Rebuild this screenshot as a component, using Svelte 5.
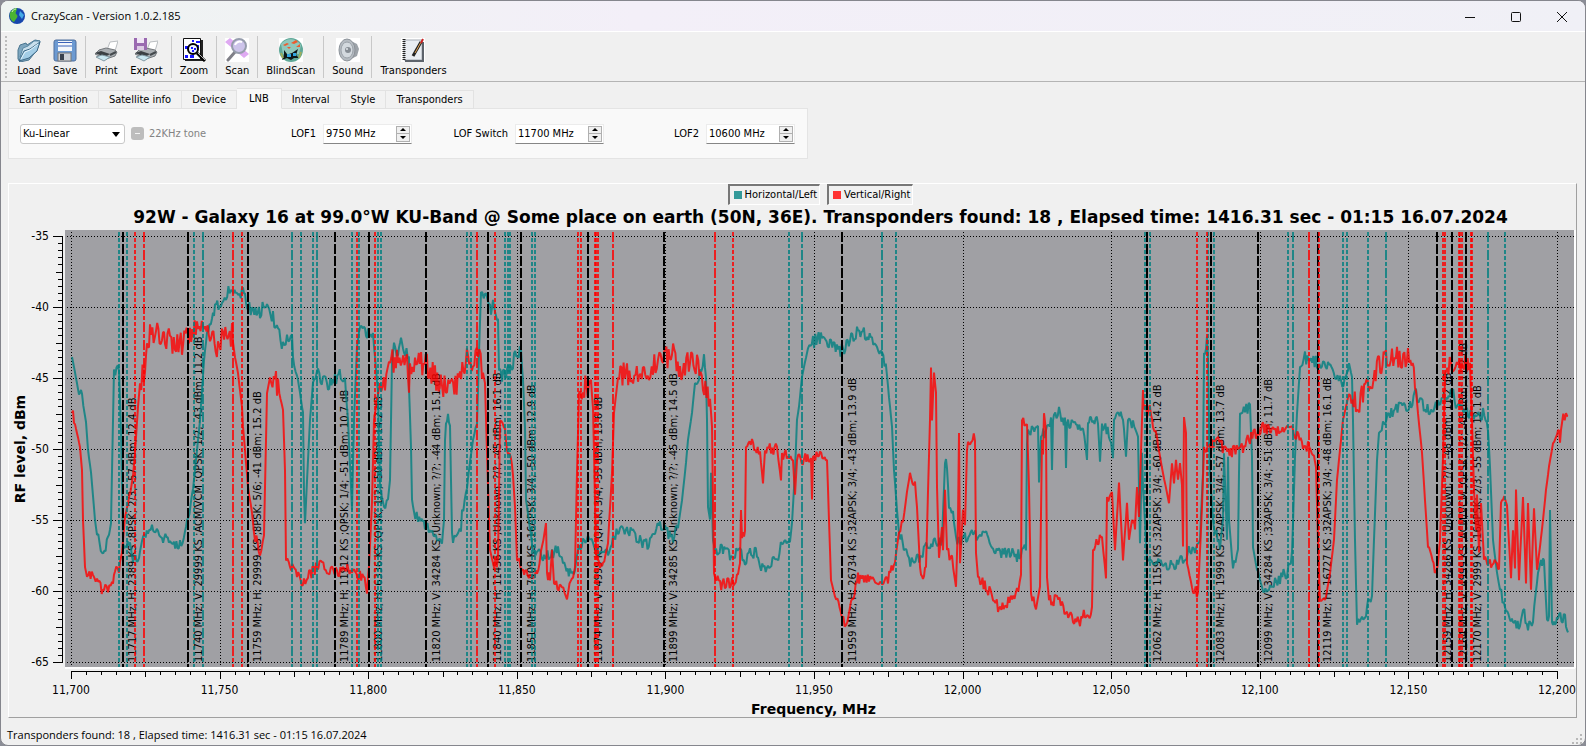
<script lang="ts">
  type Point = [number, number];
  type Marker = { x: number; kind: "black" | "teal" | "red"; long?: boolean };

  const tools = [
    ["load", "save"],
    ["print", "export"],
    ["zoom"],
    ["scan"],
    ["blind"],
    ["sound"],
    ["transponders"],
  ];
  const toolNames: Record<string, string> = {
    load: "Load",
    save: "Save",
    print: "Print",
    export: "Export",
    zoom: "Zoom",
    scan: "Scan",
    blind: "BlindScan",
    sound: "Sound",
    transponders: "Transponders",
  };

  const tabs = [
    "Earth position",
    "Satellite info",
    "Device",
    "LNB",
    "Interval",
    "Style",
    "Transponders",
  ];
  let activeTab = $state("LNB");

  let fields = $state([
    { id: "lof1", label: "LOF1", value: 9750 },
    { id: "lofsw", label: "LOF Switch", value: 11700 },
    { id: "lof2", label: "LOF2", value: 10600 },
  ]);

  const found = "Transponders found: 18 , Elapsed time: 1416.31 sec - 01:15 16.07.2024";

  // The chart is laid out for a panel this wide and stretched along x from there.
  const BASE = 1567;
  const LEFT = 71;
  let width = $state(BASE);
  const k = $derived((width - 81) / (BASE - 81));
  const sx = (x: number) => Math.round((LEFT + (x - LEFT) * k) * 10) / 10;
  const mhz = (f: number) => sx(LEFT + ((f - 11700) * 1486) / 500);
  const db = (v: number) => 236 + (-35 - v) * 14.2;

  const yTicks = Array.from({ length: 61 }, (_, i) => ({
    v: -35 - i / 2,
    len: i % 10 === 0 ? 9 : i % 5 === 0 ? 6 : 4,
  }));
  const xTicks = Array.from({ length: 101 }, (_, i) => ({
    v: 11700 + i * 5,
    len: i % 10 === 0 ? 8 : i % 5 === 0 ? 6 : 4,
  }));

  const teal: Point[] = [
    [72,357],[76,378],[79,394],[82,398],[86,422],[88,450],[91,472],[95,520],[97,535],[102,552],[108,541],[111,523],[113,420],[114,370],[119,370],
    [121,430],[123,543],[130,548],[133,556],[139,556],[142,541],[148,535],[152,527],[158,528],[162,537],[170,537],[174,546],[180,543],[185,533],
    [187,520],[192,500],[200,420],[204,360],[207,333],[212,317],[215,308],[222,305],[226,293],[232,292],[242,293],[245,298],[248,307],[252,313],
    [260,313],[265,305],[268,308],[273,318],[278,333],[283,347],[287,335],[292,337],[293,357],[297,373],[300,393],[303,413],[304,493],[305,523],
    [308,460],[310,420],[313,382],[318,375],[323,380],[328,385],[335,378],[342,375],[345,382],[348,420],[352,510],[354,420],[357,347],[359,332],
    [365,330],[368,333],[373,335],[375,357],[378,393],[380,487],[384,507],[388,500],[390,480],[392,363],[394,343],[398,352],[401,338],[404,353],
    [409,357],[409,387],[411,447],[412,500],[414,512],[418,520],[425,525],[430,533],[437,535],[442,543],[444,520],[445,440],[446,423],[448,417],
    [450,423],[451,480],[452,533],[453,543],[457,533],[461,528],[462,510],[466,497],[469,470],[473,440],[477,427],[479,353],[481,292],[485,295],
    [490,300],[491,315],[493,300],[495,312],[498,320],[499,370],[502,377],[505,375],[508,367],[513,363],[514,353],[521,353],[523,380],[525,427],
    [526,500],[533,550],[538,552],[543,555],[552,555],[558,548],[563,560],[570,573],[575,568],[578,550],[583,542],[593,540],[597,553],[603,553],
    [608,555],[613,538],[620,528],[627,530],[633,535],[640,540],[645,545],[650,543],[655,532],[660,525],[665,530],[673,537],[678,528],[682,500],
    [686,463],[688,440],[692,413],[695,383],[700,372],[704,358],[706,377],[707,420],[708,507],[710,520],[711,473],[713,540],[715,550],[723,550],
    [730,555],[740,550],[745,560],[750,552],[757,553],[760,567],[768,567],[777,560],[782,543],[790,542],[792,523],[795,470],[797,420],[799,407],
    [802,377],[805,362],[808,348],[813,342],[822,337],[830,343],[838,350],[843,350],[850,340],[857,333],[865,333],[872,338],[877,353],[882,357],
    [887,375],[889,397],[892,427],[894,470],[897,510],[899,533],[905,550],[909,560],[913,565],[918,558],[925,550],[930,543],[942,543],[943,513],
    [945,463],[947,463],[949,508],[953,515],[956,537],[960,545],[965,537],[973,535],[985,533],[992,545],[1000,553],[1010,552],[1017,557],
    [1022,550],[1026,545],[1027,443],[1028,430],[1038,430],[1039,482],[1041,437],[1047,430],[1051,423],[1052,470],[1053,420],[1054,417],
    [1059,412],[1065,422],[1066,468],[1067,423],[1075,423],[1078,433],[1083,423],[1087,460],[1088,423],[1091,416],[1098,422],[1100,462],
    [1102,424],[1110,435],[1113,458],[1114,420],[1123,416],[1126,457],[1128,420],[1133,423],[1138,435],[1140,543],[1142,453],[1143,487],
    [1147,557],[1157,563],[1167,567],[1177,563],[1183,560],[1190,548],[1195,548],[1200,537],[1203,473],[1204,353],[1207,343],[1208,360],
    [1210,473],[1213,520],[1220,547],[1223,520],[1224,453],[1227,540],[1228,457],[1229,520],[1232,557],[1233,568],[1238,550],[1239,473],
    [1240,413],[1245,410],[1250,407],[1252,457],[1253,547],[1257,570],[1262,588],[1270,585],[1280,578],[1287,572],[1292,557],[1295,457],
    [1297,413],[1300,367],[1305,358],[1317,362],[1328,365],[1335,373],[1340,382],[1347,378],[1349,363],[1352,377],[1353,420],[1355,540],
    [1357,625],[1362,620],[1366,613],[1368,600],[1372,595],[1374,540],[1377,460],[1379,433],[1383,427],[1390,413],[1400,407],[1410,407],
    [1416,393],[1420,403],[1430,410],[1437,407],[1452,390],[1457,407],[1467,413],[1475,420],[1483,413],[1488,427],[1490,467],[1493,540],
    [1497,573],[1500,590],[1505,610],[1513,620],[1520,625],[1523,610],[1528,630],[1533,617],[1538,573],[1541,560],[1544,563],[1547,620],
    [1549,622],[1550,510],[1552,622],[1555,627],[1558,617],[1565,618],[1568,627],
  ];
  const red: Point[] = [
    [72,413],[74,420],[77,433],[80,447],[82,470],[83,520],[85,567],[87,577],[93,575],[97,583],[104,592],[108,587],[112,583],[115,573],[119,567],
    [122,553],[125,517],[128,503],[132,487],[135,453],[138,407],[140,383],[145,367],[147,343],[150,333],[162,335],[165,343],[170,338],[175,347],
    [182,343],[190,333],[197,325],[203,323],[210,333],[218,347],[223,338],[232,335],[235,357],[238,373],[242,407],[243,427],[248,487],[252,513],
    [254,533],[260,553],[264,537],[265,487],[267,393],[270,377],[275,378],[278,387],[283,410],[285,470],[286,560],[290,567],[297,573],[304,583],
    [308,577],[317,567],[322,560],[327,568],[337,572],[345,565],[353,572],[360,575],[367,588],[369,567],[372,503],[374,420],[377,400],[380,383],
    [385,380],[389,362],[397,360],[407,363],[409,393],[410,363],[420,363],[428,367],[435,377],[442,387],[452,390],[460,380],[468,353],[473,363],
    [478,353],[482,367],[485,383],[487,453],[490,550],[493,563],[498,563],[500,420],[505,433],[507,450],[512,460],[515,507],[517,560],[523,568],
    [530,577],[537,570],[542,550],[546,523],[547,573],[550,580],[552,550],[554,583],[562,588],[567,595],[572,583],[575,567],[577,473],[579,393],
    [583,388],[590,387],[593,397],[594,453],[596,553],[600,568],[603,567],[608,543],[612,473],[614,413],[618,378],[627,373],[638,372],[649,380],
    [653,367],[663,360],[672,353],[680,370],[690,360],[697,367],[703,387],[710,397],[712,427],[714,573],[720,585],[737,580],[740,563],[741,510],
    [742,538],[745,533],[746,447],[752,445],[760,453],[763,483],[765,450],[777,448],[781,480],[782,453],[788,457],[793,460],[795,495],[797,460],
    [811,458],[812,500],[813,457],[827,458],[829,520],[831,580],[835,597],[842,615],[846,630],[850,607],[858,578],[880,582],[888,580],[895,560],
    [899,533],[903,523],[907,492],[910,473],[915,485],[917,507],[920,567],[923,575],[926,570],[928,492],[930,420],[931,367],[932,420],[934,373],
    [936,393],[937,487],[939,558],[942,527],[943,550],[945,490],[947,550],[952,560],[956,587],[958,520],[959,433],[960,563],[963,510],[965,525],
    [967,450],[970,440],[975,438],[976,553],[978,577],[987,587],[993,598],[998,607],[1007,602],[1017,593],[1021,580],[1022,420],[1027,423],
    [1029,487],[1031,593],[1036,608],[1040,587],[1042,440],[1043,455],[1044,413],[1046,430],[1047,577],[1049,600],[1057,600],[1067,612],
    [1073,620],[1080,622],[1085,613],[1092,612],[1093,550],[1102,537],[1106,578],[1107,497],[1112,492],[1115,550],[1119,483],[1123,560],
    [1127,503],[1129,540],[1132,520],[1135,525],[1137,487],[1139,517],[1142,420],[1143,390],[1144,410],[1151,410],[1153,427],[1157,440],
    [1163,473],[1169,503],[1172,463],[1174,483],[1176,460],[1178,480],[1180,463],[1182,485],[1183,547],[1184,417],[1186,433],[1187,563],
    [1192,587],[1198,595],[1202,507],[1204,447],[1210,447],[1217,440],[1225,450],[1233,452],[1243,447],[1250,438],[1263,427],[1273,433],
    [1285,427],[1295,433],[1303,443],[1313,450],[1316,467],[1318,540],[1320,600],[1325,603],[1330,573],[1334,540],[1337,480],[1340,450],
    [1343,420],[1348,397],[1357,403],[1363,397],[1370,380],[1378,367],[1387,360],[1397,357],[1402,363],[1408,357],[1415,380],[1418,413],
    [1422,453],[1425,500],[1428,547],[1437,575],[1440,540],[1443,457],[1445,373],[1452,362],[1463,363],[1470,370],[1472,420],[1474,490],
    [1476,530],[1477,495],[1479,552],[1481,503],[1484,560],[1497,567],[1499,570],[1501,503],[1503,497],[1507,507],[1511,578],[1513,530],
    [1515,568],[1516,490],[1519,580],[1523,497],[1526,583],[1528,503],[1531,590],[1534,508],[1537,570],[1540,547],[1543,520],[1546,490],
    [1549,467],[1553,443],[1557,433],[1560,437],[1562,423],[1566,412],[1568,413],
  ];

  // Receiver noise rides on the flat parts; flanks stay clean.
  function noisy(points: Point[], seed: number, strong: number) {
    let s = seed;
    const rnd = () => (s = (s * 16807) % 2147483647) / 2147483647 - 0.5;
    const out: Point[] = [points[0]];
    for (let i = 1; i < points.length; i++) {
      const [x0, y0] = points[i - 1];
      const [x1, y1] = points[i];
      const dx = x1 - x0;
      const slope = Math.abs(y1 - y0) / Math.max(dx, 1);
      const amp = slope > 4 ? 1 : (y0 + y1) / 2 < 405 ? strong : 12;
      const n = Math.max(1, Math.round(dx / 1.2));
      for (let j = 1; j <= n; j++) {
        out.push([x0 + (dx * j) / n, y0 + ((y1 - y0) * j) / n + rnd() * amp]);
      }
    }
    return out;
  }
  const tealTrace = noisy(teal, 411, 14);
  const redTrace = noisy(red, 97, 25);
  const toPoints = (t: Point[]) =>
    t.map(([x, y]) => `${sx(x)},${y.toFixed(1)}`).join(" ");

  const longDash = [144, 203, 233, 292, 317, 477, 613, 715, 802, 882, 1293, 1309, 1386, 1488];
  const mark = (kind: Marker["kind"], xs: number[]): Marker[] =>
    xs.map((x) => ({ x, kind, long: longDash.includes(x) }));
  const markers = [
    ...mark("teal", [119, 127, 194, 203, 292, 301, 313, 317, 352, 359, 378, 381, 467, 471, 505, 508, 510, 532, 535, 789, 802, 882, 896, 1145, 1147, 1150, 1208, 1214, 1288, 1293, 1343, 1347, 1368, 1386, 1488, 1505]),
    ...mark("black", [123, 188, 248, 335, 369, 426, 488, 521, 588, 664, 842, 1147, 1211, 1258, 1318, 1437, 1452, 1466]),
    ...mark("red", [135, 144, 233, 242, 357, 375, 477, 495, 578, 581, 595, 596, 598, 613, 715, 733, 1197, 1207, 1309, 1319, 1443, 1445, 1459, 1460, 1462, 1471, 1472]),
  ];

  const carriers = [
    { x: 136, text: "11717 MHz; H; 2389 KS ;8PSK; 2/3; -57 dBm; 12.4 dB" },
    { x: 202, text: "11740 MHz; V; 29999 KS ;ACM/VCM ;QPSK; 1/2; -43 dBm; 11.2 dB" },
    { x: 261, text: "11759 MHz; H; 29999 KS ;8PSK; 5/6; -41 dBm; 15.2 dB" },
    { x: 348, text: "11789 MHz; H; 11912 KS ;QPSK; 1/4; -51 dBm; 10.7 dB" },
    { x: 382, text: "11800 MHz; H; 6336 KS ;QPSK; 1/2; -50 dBm; 14.2 dB" },
    { x: 440, text: "11820 MHz; V; 34284 KS ;Unknown; ?/?; -44 dBm; 15.1 dB" },
    { x: 501, text: "11840 MHz; H; 11436 KS ;Unknown; ?/?; -45 dBm; 16.1 dB" },
    { x: 535, text: "11851 MHz; H; 7409 KS ;16APSK; 3/4; -50 dBm; 12.9 dB" },
    { x: 602, text: "11874 MHz; V; 4999 KS ;QPSK; 3/4; -55 dBm; 13.6 dB" },
    { x: 677, text: "11899 MHz; V; 34285 KS ;Unknown; ?/?; -45 dBm; 14.5 dB" },
    { x: 856, text: "11959 MHz; H; 26734 KS ;32APSK; 3/4; -43 dBm; 13.9 dB" },
    { x: 1161, text: "12062 MHz; H; 1159 KS ;32APSK; 3/4; -60 dBm; 14.2 dB" },
    { x: 1224, text: "12083 MHz; H; 1999 KS ;32APSK; 3/4; -57 dBm; 13.7 dB" },
    { x: 1272, text: "12099 MHz; V; 34284 KS ;32APSK; 3/4; -51 dBm; 11.7 dB" },
    { x: 1331, text: "12119 MHz; H; 16727 KS ;32APSK; 3/4; -48 dBm; 16.1 dB" },
    { x: 1451, text: "12159 MHz; H; 34286 KS ;Unknown; ?/?; -48 dBm; 11.2 dB" },
    { x: 1467, text: "12164 MHz; V; 4999 KS ;ACM/VCM ;QPSK; 1/2; -48 dBm; 11.2 dB" },
    { x: 1481, text: "12170 MHz; V; 2999 KS ;16APSK; 2/3; -55 dBm; 12.1 dB" },
  ];
</script>

{#snippet toolIcon(name: string)}
  <svg class="tool-icon" width="24" height="24" viewBox="0 0 24 24" aria-hidden="true">
    {#if name === "load"}
      <path d="M1 12 3 7l6-2 1 2 8-5 5 1-3 9-8 10-9 2-2-3z" fill="#7ea6bf" stroke="#4b7690" />
      <path d="m3 19 3-9 5-2 6-5 6 0-3 8-8 6z" fill="#c9dfec" stroke="#5d8aa5" />
      <path d="m2 23 5-10 6-2 10-7-3 9-8 7z" fill="#a3cde6" stroke="#3d6885" />
      <path d="m4 21 4-7 5-2 8-6" fill="none" stroke="#e4f4fc" />
    {:else if name === "save"}
      <rect x="1" y="2" width="22" height="21" rx="2" fill="#6c9ad2" stroke="#4f6e9c" />
      <rect x="5" y="3" width="14" height="10" fill="#f3f7fb" />
      <path d="M5 4.5h14M5 8h14" stroke="#3b62b8" />
      <rect x="5" y="15" width="13" height="8" fill="#cfd3d8" stroke="#777" />
      <rect x="7" y="16" width="4" height="6" fill="#39424e" />
    {:else if name === "print" || name === "export"}
      <path d="m13 12 3-8 8-1-3 10z" fill="#fff" stroke="#b9bdc0" />
      <path d="m5 12 7-2 9 2 2 2-2 4-9 3-11-5z" fill="#a9aeb2" stroke="#74787c" />
      <path d="m1 15 6-2 9 3-5 3z" fill="#3a3f43" />
      <path d="m2 19 6-2 8 2-6 4z" fill="#c8e6f0" stroke="#8299a3" />
      <path d="m16 17 6-3" stroke="#44494d" stroke-width="2" />
      {#if name === "export"}
        <rect x="0" y="0" width="13" height="12" fill="#9a6ab0" />
        <rect x="3" y="0" width="7" height="5" fill="#f1e6f6" />
        <rect x="3" y="8" width="7" height="4" fill="#dccbe4" />
      {/if}
    {:else if name === "zoom"}
      <path d="M3 2h18v21H3z" fill="#222" />
      <path d="M1.500.500h17v21h-17z" fill="#fff" stroke="#111" />
      <path d="M3 8h3v3H3zM14 3h4v2h-4zM3 17h3v3H3zM8 17h4v3H8zM15 7h2v3h-2zM10 2h2v2h-2z" fill="#1616ff" />
      <circle cx="11" cy="11" r="5" fill="#eef2ff" stroke="#000" stroke-width="2" />
      <path d="M9 9h2v2H9zM12 10h2v2h-2zM10 12h2v2h-2z" fill="#1c1cff" />
      <path d="m15 15 8 8" stroke="#000" stroke-width="3" />
      <path d="m16 15 7 7" stroke="#bbb" />
    {:else if name === "scan"}
      <path d="M0 0h24v24H0z" fill="#fff" />
      <path d="m0 4 5-4 19 16-5 4z" fill="#dfaaf2" />
      <path d="m10 14-7 8" stroke="#808088" stroke-width="3" stroke-linecap="round" />
      <circle cx="14" cy="8" r="7" fill="#cdc4ea" stroke="#969dac" stroke-width="2" />
      <path d="M10 7c1-3 4-4 7-3" fill="none" stroke="#fff" stroke-width="2" />
    {:else if name === "blind"}
      <path d="M0 0h24v24H0z" fill="#fff" />
      <circle cx="12" cy="12" r="12" fill="#5fa898" />
      <path d="M2 6c5-6 14-7 20 1l-2 9H4z" fill="#90c7bb" />
      <path d="m4 7 4-2 2 1-4 2zM12 5l5-3 2 2-4 2zM17 9l4-3v3zM8 9l4 0-2 2z" fill="#ee5b2e" />
      <path d="m5 12 3 4h2l3-1 6-4-2 6 3 3-5 0-3 2-4-2-5 2 2-5z" fill="#0d1719" />
      <path d="M8 16h4v3H8zM14 15h3v3h-3z" fill="#31a5e2" />
      <path d="m2 15 2 5M22 14l-2 6" stroke="#9fae5d" stroke-width="2" />
    {:else if name === "sound"}
      <path d="M0 0h24v24H0z" fill="#fff" />
      <path d="m11 1 10 5 2 5-2 7-10 5z" fill="#9da3a9" />
      <ellipse cx="11" cy="12" rx="8" ry="11" fill="#b5bbc1" stroke="#8c9299" />
      <ellipse cx="11" cy="12" rx="6" ry="8" fill="#d3d9de" stroke="#9aa1a8" />
      <circle cx="12" cy="12" r="3" fill="#868d94" />
      <circle cx="11" cy="11" r="1" fill="#dfe5e9" />
    {:else}
      <path d="M0 0h24v24H0z" fill="#fff" />
      <path d="M3 2h18v20H3z" fill="#e9edf2" stroke="#a5abb3" />
      <path d="M4 23h18V4" fill="none" stroke="#5d636b" stroke-width="2" />
      <path d="M3 1v22" stroke="#222" stroke-width="3" stroke-dasharray="1 1" />
      <path d="M12 18 20 4" stroke="#222" stroke-width="3" />
      <path d="M14 15 20 4" stroke="#e0a050" stroke-width="1" />
      <path d="m20 5 2-4" stroke="#c22" stroke-width="2" />
    {/if}
  </svg>
{/snippet}

<div class="window">
  <header class="titlebar">
    <svg width="16" height="16" viewBox="0 0 16 16" aria-hidden="true">
      <circle cx="8" cy="8" r="8" fill="#1747ad" />
      <path d="M1 5C2 2 5 0 8 0c0 3-2 4-1 6 2 1 2 3 0 5l-2 3C2 13 0 9 1 5z" fill="#4bb432" />
      <path d="m11 3 4 4-2 4-3-4z" fill="#43a9e6" />
      <path d="M3 4c1-2 2-3 4-3" stroke="#d5f5c4" fill="none" />
    </svg>
    <span class="caption">CrazyScan - Version 1.0.2.185</span>
    <button class="sys" aria-label="Minimize">
      <svg width="12" height="12" viewBox="0 0 12 12"><path d="M1 6.500h10" /></svg>
    </button>
    <button class="sys" aria-label="Maximize">
      <svg width="12" height="12" viewBox="0 0 12 12"><rect x="1.500" y="1.500" width="9" height="9" rx="1" /></svg>
    </button>
    <button class="sys" aria-label="Close">
      <svg width="12" height="12" viewBox="0 0 12 12"><path d="m1 1 10 10M11 1 1 11" /></svg>
    </button>
  </header>

  <div class="toolbar" role="toolbar">
    <span class="grip"></span>
    {#each tools as group, i}
      {#if i > 0}<span class="sep"></span>{/if}
      {#each group as name}
        <button class="tool">
          {@render toolIcon(name)}
          {toolNames[name]}
        </button>
      {/each}
    {/each}
  </div>

  <div class="tabs" role="tablist">
    {#each tabs as tab}
      <button
        class="tab"
        class:active={tab === activeTab}
        role="tab"
        aria-selected={tab === activeTab}
        onclick={() => (activeTab = tab)}>{tab}</button
      >
    {/each}
  </div>
  <div class="pane" role="tabpanel">
    <div class="lnb">
      <div class="combo">
        <select aria-label="LNB type">
          <option>Ku-Linear</option>
        </select>
      </div>
      <label class="tone"><input type="checkbox" disabled />22KHz tone</label>
    </div>
    {#each fields as field}
      <div class="field">
        <label for={field.id}>{field.label}</label>
        <div class="spin">
          <input id={field.id} type="text" value={`${field.value} MHz`} />
          <div class="arrows">
            <button aria-label="Increase" onclick={() => field.value++}>
              <svg width="6" height="3" viewBox="0 0 6 3"><path d="M0 3 3 0 6 3z" /></svg>
            </button>
            <button aria-label="Decrease" onclick={() => field.value--}>
              <svg width="6" height="3" viewBox="0 0 6 3"><path d="M0 0 3 3 6 0z" /></svg>
            </button>
          </div>
        </div>
      </div>
    {/each}
  </div>

  <main class="chart" bind:clientWidth={width}>
    <div class="legend">
      <button><i class="swatch teal"></i>Horizontal/Left</button>
      <button><i class="swatch red"></i>Vertical/Right</button>
    </div>
    <h1>
      92W - Galaxy 16 at 99.0°W KU-Band @ Some place on earth (50N, 36E). {found}
    </h1>
    <svg {width} height="487" viewBox={`9 230 ${width} 487`}>
      <rect x="65" y="230" width={sx(1575) - 65} height="437" fill="#a0a0a4" />
      <path class="sunken" d={`M65 668H${sx(1575)}M${sx(1575)} 230V668`} />
      {#each yTicks as t}
        {#if t.len === 9}
          <line class="grid" x1="67" x2={sx(1574)} y1={db(t.v) + 0.5} y2={db(t.v) + 0.5} />
          <text class="num" x="49" y={db(t.v) + 4} text-anchor="end">{t.v}</text>
        {/if}
        <line class="axis" x1={62 - t.len} x2="62" y1={Math.round(db(t.v)) + 0.5} y2={Math.round(db(t.v)) + 0.5} />
      {/each}
      <line class="axis" x1="62.5" x2="62.5" y1="236" y2="663" />
      {#each xTicks as t}
        {#if t.len === 8}
          <line class="grid" x1={Math.round(mhz(t.v)) + 0.5} x2={Math.round(mhz(t.v)) + 0.5} y1="232" y2="667" />
          <text class="num" x={mhz(t.v)} y="694" text-anchor="middle">{t.v.toLocaleString("en-US")}</text>
        {/if}
        <line class="axis" x1={Math.round(mhz(t.v)) + 0.5} x2={Math.round(mhz(t.v)) + 0.5} y1="671" y2={671 + t.len} />
      {/each}
      <line class="axis" x1="71" x2={sx(1558)} y1="671.5" y2="671.5" />

      {#each carriers as c}
        <text class="carrier" transform={`translate(${sx(c.x)} 662) rotate(-90)`}>{c.text}</text>
      {/each}
      <polyline class="trace teal" points={toPoints(tealTrace)} />
      <polyline class="trace red" points={toPoints(redTrace)} />
      {#each markers as m}
        <line class={["marker", m.kind, m.long && "long"]} x1={sx(m.x)} x2={sx(m.x)} y1="232" y2="667" />
      {/each}

      <text class="axis-title" x={(62 + sx(1575)) / 2 - 5} y="714" text-anchor="middle">Frequency, MHz</text>
      <text class="axis-title" transform="translate(25 449) rotate(-90)" text-anchor="middle">RF level, dBm</text>
    </svg>
  </main>

  <footer class="status">
    <span>{found}</span>
    <svg width="11" height="11" viewBox="0 0 11 11" aria-hidden="true">
      <path d="M8 0h2v2H8zM4 4h2v2H4zM8 4h2v2H8zM0 8h2v2H0zM4 8h2v2H4zM8 8h2v2H8z" fill="#b8b8b8" />
    </svg>
  </footer>
</div>

<style>
  :global(body) {
    background: #8b8d96;
  }

  .window {
    display: flex;
    flex-direction: column;
    box-sizing: border-box;
    min-height: 100vh;
    border: 1px solid #85868d;
    border-radius: 8px;
    overflow: hidden;
    background: #f0f0f0;
    color: #000;
    font: 11px/14px "DejaVu Sans Condensed", "DejaVu Sans", sans-serif;
    font-stretch: condensed;
  }

  button,
  input,
  select {
    font: inherit;
    color: inherit;
  }

  button {
    margin: 0;
    padding: 0;
    border: 0;
    background: none;
  }

  .titlebar {
    display: flex;
    align-items: center;
    height: 30px;
    padding-left: 8px;
    background: linear-gradient(90deg, #eef4f1, #f3eff8 40%, #f0f0f6);
    font: 11px/16px "Open Sans", sans-serif;
  }

  .caption {
    flex: 1;
    margin-left: 6px;
  }

  .sys {
    width: 46px;
    height: 30px;
  }

  .sys svg {
    fill: none;
    stroke: #111;
    vertical-align: middle;
  }

  .toolbar {
    display: flex;
    align-items: stretch;
    height: 42px;
    padding: 4px 0 3px 4px;
    border-top: 1px solid #fff;
    border-bottom: 1px solid #b4b4b4;
  }

  .grip {
    width: 2px;
    margin-right: 2px;
    border-left: 2px dotted #bcbcbc;
  }

  .sep {
    width: 1px;
    margin: 0 2px;
    background: #c8c8c8;
  }

  .tool {
    display: flex;
    flex-direction: column;
    align-items: center;
    padding: 2px 6px 0;
    white-space: nowrap;
  }

  .tool-icon {
    margin-bottom: 2px;
  }

  .tabs {
    display: flex;
    align-items: flex-end;
    height: 27px;
    padding-left: 7px;
    position: relative;
    margin-bottom: -1px;
  }

  .tab {
    height: 19px;
    padding: 1px 10px 0;
    border: 1px solid #e2e2e2;
    border-left-width: 0;
    background: #f2f2f2;
    white-space: nowrap;
  }

  .tab:first-child {
    border-left-width: 1px;
  }

  .tab.active {
    height: 21px;
    padding: 0 12px;
    border-bottom-color: #f9f9f9;
    background: #f9f9f9;
  }

  .pane {
    display: grid;
    grid-template-columns: 199px 193px 192px 191px;
    align-items: center;
    box-sizing: border-box;
    width: 800px;
    max-width: 100%;
    height: 51px;
    margin-left: 7px;
    padding-left: 11px;
    border: 1px solid #e4e4e4;
    background: #f9f9f9;
  }

  .lnb,
  .tone,
  .field {
    display: flex;
    align-items: center;
  }

  .combo {
    position: relative;
    width: 105px;
    flex: none;
  }

  .combo::after {
    content: "";
    position: absolute;
    right: 5px;
    top: 8px;
    border: 4px solid transparent;
    border-top: 5px solid #000;
    border-bottom: 0;
    pointer-events: none;
  }

  select {
    appearance: none;
    width: 100%;
    height: 20px;
    padding: 0 2px;
    border: 1px solid #c8c8c8;
    border-radius: 3px;
    background: #fff;
    vertical-align: middle;
  }

  .tone {
    margin-left: 6px;
    color: #838383;
    white-space: nowrap;
  }

  .tone input {
    appearance: none;
    display: grid;
    place-items: center;
    width: 13px;
    height: 13px;
    margin: 0 5px 0 0;
    border-radius: 3px;
    background: #bdbdbd;
  }

  .tone input::before {
    content: "";
    width: 5px;
    height: 1px;
    background: #f4f4f4;
  }

  .field {
    justify-content: flex-end;
    gap: 7px;
    white-space: nowrap;
  }

  .spin {
    display: flex;
    box-sizing: border-box;
    width: 89px;
    height: 20px;
    padding: 1px;
    border: 1px solid #ececec;
    border-bottom-color: #868686;
    background: #fff;
  }

  .spin input {
    flex: 1;
    min-width: 0;
    padding: 1px 0 0 1px;
    border: 0;
    outline: 0;
    background: none;
  }

  .arrows {
    display: flex;
    flex-direction: column;
    width: 14px;
    outline: 1px solid #b0b0b0;
    outline-offset: -1px;
  }

  .arrows button {
    display: grid;
    place-items: center;
    flex: 1;
    border: 1px solid #b0b0b0;
    background: #f0f0f0;
  }

  .arrows button + button {
    border-top: 0;
  }

  .chart {
    margin: 24px 8px 0 7px;
    border: 1px solid #fff;
    border-right-color: #a0a0a0;
    border-bottom-color: #a0a0a0;
    overflow: hidden;
  }

  .chart > svg {
    display: block;
  }

  .legend,
  h1 {
    padding-left: 56px;
  }

  .legend {
    display: flex;
    justify-content: center;
    gap: 7px;
    height: 21px;
  }

  .legend button {
    display: flex;
    align-items: center;
    gap: 3px;
    padding: 0 2px 0 4px;
    border: 1px solid #fff;
    border-top: 2px solid #777;
    border-left: 2px solid #777;
  }

  .swatch {
    width: 8px;
    height: 8px;
  }

  .swatch.teal {
    background: #339999;
  }

  .swatch.red {
    background: #ff3333;
  }

  h1 {
    margin: 0;
    height: 25px;
    font: bold 17px/25px "DejaVu Sans", sans-serif;
    text-align: center;
    white-space: nowrap;
  }

  .sunken {
    fill: none;
    stroke: #fff;
    stroke-width: 2;
  }

  .grid {
    stroke: #000;
    stroke-dasharray: 1 2;
  }

  .axis {
    stroke: #000;
  }

  .num {
    font-size: 12px;
  }

  .carrier {
    font-size: 11px;
  }

  .axis-title {
    font: bold 14px "DejaVu Sans", sans-serif;
  }

  .trace {
    fill: none;
    stroke-width: 2;
    stroke-linejoin: bevel;
  }

  .trace.teal,
  .marker.teal {
    stroke: rgba(0, 128, 128, 0.8);
  }

  .trace.red,
  .marker.red {
    stroke: rgba(255, 0, 0, 0.8);
  }

  .marker {
    stroke-width: 2;
    stroke-dasharray: 4 2;
  }

  .marker.long {
    stroke-dasharray: 10 2 4 2;
  }

  .marker.black {
    stroke: #000;
    stroke-dasharray: 10 2;
  }

  .status {
    display: flex;
    flex: 1;
    align-items: flex-end;
    justify-content: space-between;
    min-height: 27px;
    padding: 0 2px 0 6px;
    font: 11px/16px "Open Sans", sans-serif;
  }

  .status span {
    padding-bottom: 2px;
  }
</style>
